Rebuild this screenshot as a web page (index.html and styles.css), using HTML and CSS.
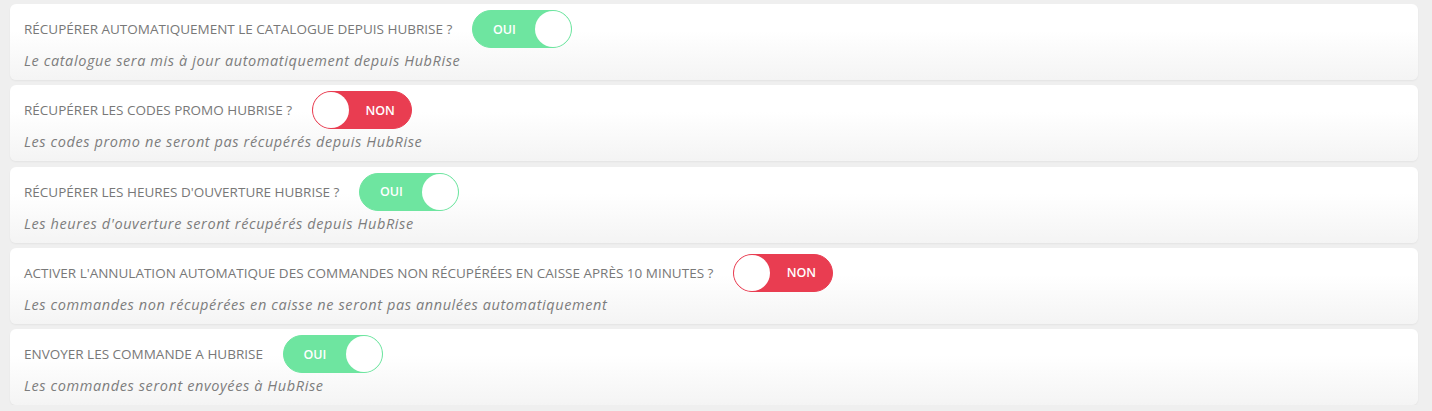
FILE: index.html
```html
<!DOCTYPE html>
<html lang="fr">
<head>
<meta charset="utf-8">
<title>Paramètres HubRise</title>
<link rel="stylesheet" href="styles.css">
</head>
<body>
<div class="list">
  <div class="card">
    <div class="row">
      <span class="title">Récupérer automatiquement le catalogue depuis HubRise ?</span>
      <span class="toggle on"><span class="label">OUI</span><span class="knob"></span></span>
    </div>
    <p class="desc">Le catalogue sera mis à jour automatiquement depuis HubRise</p>
  </div>
  <div class="card">
    <div class="row">
      <span class="title">Récupérer les codes promo HubRise ?</span>
      <span class="toggle off"><span class="knob"></span><span class="label">NON</span></span>
    </div>
    <p class="desc">Les codes promo ne seront pas récupérés depuis HubRise</p>
  </div>
  <div class="card">
    <div class="row">
      <span class="title">Récupérer les heures d'ouverture HubRise ?</span>
      <span class="toggle on"><span class="label">OUI</span><span class="knob"></span></span>
    </div>
    <p class="desc">Les heures d'ouverture seront récupérés depuis HubRise</p>
  </div>
  <div class="card">
    <div class="row">
      <span class="title">Activer l'annulation automatique des commandes non récupérées en caisse après 10 minutes ?</span>
      <span class="toggle off"><span class="knob"></span><span class="label">NON</span></span>
    </div>
    <p class="desc">Les commandes non récupérées en caisse ne seront pas annulées automatiquement</p>
  </div>
  <div class="card">
    <div class="row">
      <span class="title">Envoyer les commande a HubRise</span>
      <span class="toggle on"><span class="label">OUI</span><span class="knob"></span></span>
    </div>
    <p class="desc">Les commandes seront envoyées à HubRise</p>
  </div>
</div>
</body>
</html>
```
FILE: styles.css
```css
* { box-sizing: border-box; }
html, body { margin: 0; padding: 0; }
body {
  background: #efefef;
  font-family: "Open Sans", "Noto Sans", sans-serif;
  padding: 4px 14px 0 10px;
}
.list {
  display: flex;
  flex-direction: column;
  gap: 5.25px;
}
.card {
  background: linear-gradient(180deg, #ffffff 0%, #ffffff 35%, #f4f4f4 100%);
  border-radius: 6px;
  padding: 6px 14px 9px;
  box-shadow: 0 1px 2px rgba(0,0,0,0.05);
}
.row {
  display: flex;
  align-items: center;
  gap: 20px;
  height: 38px;
}
.title {
  text-transform: uppercase;
  font-size: 13.5px;
  color: #787878;
  font-weight: 400;
  letter-spacing: 0;
}
.desc {
  margin: 3px 0 0;
  line-height: 20px;
  font-size: 14.5px;
  letter-spacing: 0.6px;
  font-style: italic;
  color: #7d7d7d;
}
.toggle {
  display: flex;
  align-items: center;
  width: 100px;
  height: 38px;
  border-radius: 19px;
  padding: 0;
  border: 1px solid;
}
.toggle.on { background: #6ee5a0; border-color: #6ee5a0; }
.toggle.off { background: #e93d51; border-color: #e93d51; }
.knob {
  width: 36px;
  height: 36px;
  border-radius: 50%;
  background: #ffffff;
  flex: none;
}
.label {
  flex: 1;
  text-align: center;
  color: #ffffff;
  font-size: 12.5px;
  font-weight: 600;
}
```
